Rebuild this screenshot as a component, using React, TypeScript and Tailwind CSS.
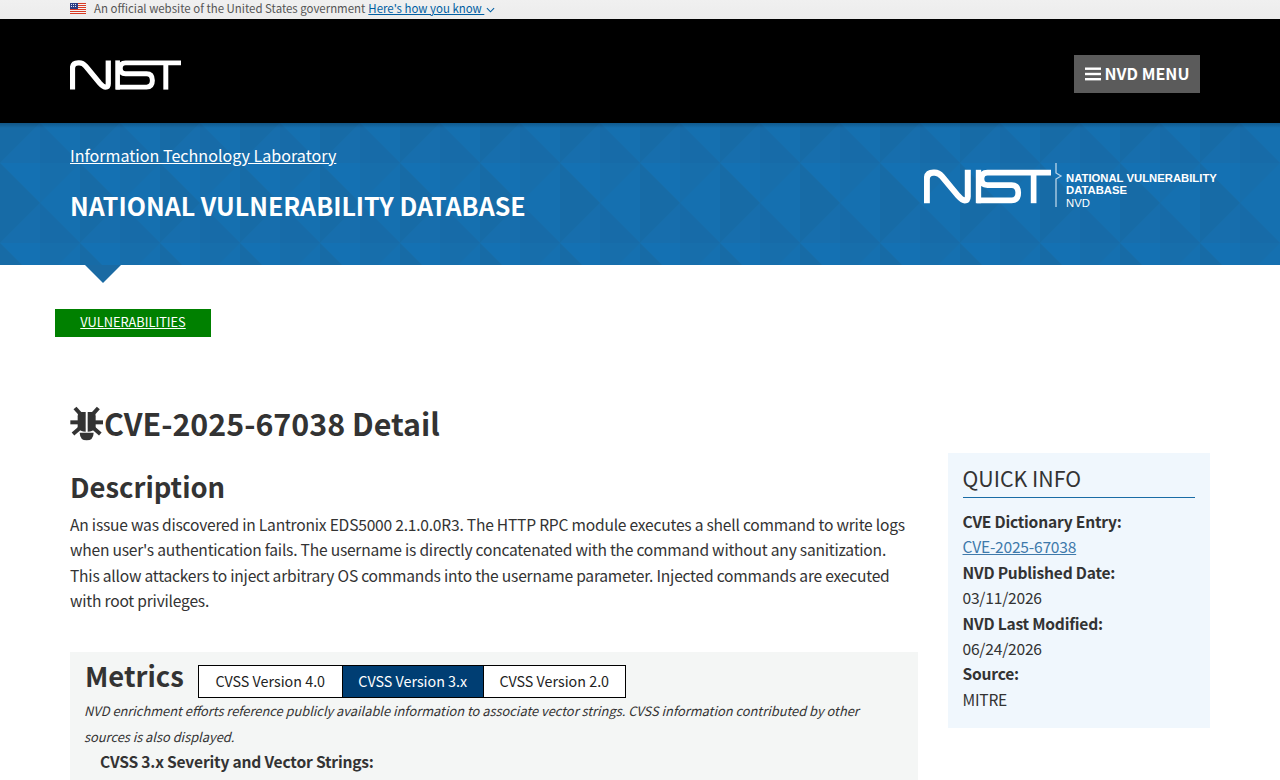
import React from "react";

function NistLogo({ className }: { className?: string }) {
  return (
    <svg viewBox="0 0 380 100" className={className} fill="none" stroke="currentColor" strokeWidth="17">
      <path d="M8.5 100V28Q8.5 8.5 28 8.5H32Q44 8.5 54 20L102 78Q114 91.5 122 91.5Q131 91.5 131 80V0" strokeWidth="18" />
      <path d="M163 0V100" strokeWidth="16" />
      <path d="M380 8.5H190Q172 8.5 172 27Q172 46 190 46H262Q282 46 282 69Q282 91.5 262 91.5H158" />
      <path d="M328 8V100" />
    </svg>
  );
}

function Flag() {
  return (
    <svg viewBox="0 0 16 11" className="w-4 h-[11px] shrink-0">
      <rect width="16" height="11" fill="#f4f4f4" />
      {[0, 2, 4, 6, 8, 10].map((y) => (
        <rect key={y} y={y} width="16" height="1" fill="#d83a24" />
      ))}
      <rect width="8" height="6" fill="#2b3d85" />
      {[1, 3, 5].map((x) =>
        [1, 3].map((y) => <rect key={`${x}${y}`} x={x} y={y} width="1" height="1" fill="#dfe3f2" />)
      )}
    </svg>
  );
}

function Bug() {
  return (
    <svg viewBox="0 0 135 126" className="w-[45px] h-[42px] -ml-[5px] -mr-[6px] shrink-0" fill="#333">
      <path d="M38 40Q38 28 50 27H62V86Q46 86 38 74Z" />
      <path d="M92 40Q92 28 80 27H68V86Q84 86 92 74Z" />
      <path d="M44 89H86Q85 112 65 112Q45 112 44 89Z" />
      <g stroke="#333" strokeWidth="12">
        <path d="M30 15L50 37" />
        <path d="M100 15L80 37" />
        <path d="M16 58H42" />
        <path d="M114 58H88" />
        <path d="M24 93L44 76" />
        <path d="M106 93L86 76" />
      </g>
    </svg>
  );
}

function Pattern() {
  return (
    <svg className="absolute inset-0 w-full h-full" aria-hidden="true">
      <defs>
        <pattern id="tile" x="0" y="40" width="80" height="80" patternUnits="userSpaceOnUse">
          <rect width="80" height="80" fill="#176ea9" />
          <path d="M0 0H40V40Z" fill="#1471b3" />
          <path d="M0 0V40H40Z" fill="#176ba6" />
          <path d="M40 0H80L40 40Z" fill="#176eab" />
          <path d="M80 0V40H40Z" fill="#1570b0" />
          <path d="M0 40H40L0 80Z" fill="#176ba6" />
          <path d="M40 40V80H0Z" fill="#176ead" />
          <path d="M40 40H80V80Z" fill="#1570b0" />
          <path d="M40 40V80H80Z" fill="#176ba8" />
        </pattern>
      </defs>
      <rect width="100%" height="100%" fill="url(#tile)" />
    </svg>
  );
}

export default function App() {
  return (
    <div className="w-[1280px] h-[780px] overflow-hidden bg-white text-[#333] font-['Noto_Sans_CJK_SC','Noto_Sans',sans-serif]">
      <div className="h-[19px] bg-gradient-to-b from-[#f0f0f0] to-[#ececec] px-[70px] flex items-center text-[11.45px] leading-[17px] pb-[2px]">
        <Flag />
        <span className="ml-2 text-[#555]">An official website of the United States government</span>
        <a className="ml-[3px] text-[#005ea2] underline whitespace-pre">Here's how you know </a>
        <svg viewBox="0 0 10 6" className="w-[9px] h-[6px] ml-[2px] mt-[2px]" fill="none" stroke="#005ea2" strokeWidth="1.2">
          <path d="M1 1L5 5L9 1" />
        </svg>
      </div>

      <div className="h-[104px] bg-black px-[70px] pr-[80px] flex items-start justify-between">
        <NistLogo className="w-[111px] h-[30px] mt-[41px] text-white" />
        <button className="mt-9 pb-[1px] h-[38px] w-[126px] bg-[#5b5b5b] text-white font-bold text-[16.1px] flex items-center justify-center gap-1">
          <svg viewBox="0 0 16 14" className="w-4 h-[14px]" fill="white">
            <rect y="0.5" width="16" height="2.4" />
            <rect y="5.8" width="16" height="2.4" />
            <rect y="11" width="16" height="2.4" />
          </svg>
          NVD MENU
        </button>
      </div>

      <div className="relative h-[142px] px-[70px]">
        <Pattern />
        <div className="absolute inset-x-0 top-0 h-[5px] bg-gradient-to-b from-[#00000033] to-transparent" />
        <div className="relative flex justify-between">
          <div>
            <a className="block mt-[18px] text-[16.1px] leading-[28px] text-white underline">Information Technology Laboratory</a>
            <h2 className="mt-[18px] text-[25px] leading-[36px] font-bold text-white">NATIONAL VULNERABILITY DATABASE</h2>
          </div>
          <div className="mt-[40px] -mr-[7px] flex items-start text-white">
            <NistLogo className="w-[127px] h-[35px] mt-[6px]" />
            <svg viewBox="0 0 10 46" className="w-[10px] h-[46px] ml-[3px] -mt-[1px]" fill="none" stroke="#b9d4e8" strokeWidth="1.3">
              <path d="M2 1V11L7 14L2 17V45" />
            </svg>
            <div className="mt-[9px] ml-[2px] font-['Liberation_Sans',sans-serif] text-[11.3px] leading-[12.3px] w-[151px] whitespace-nowrap">
              <div className="font-bold">NATIONAL VULNERABILITY</div>
              <div className="font-bold">DATABASE</div>
              <div>NVD</div>
            </div>
          </div>
        </div>
      </div>

      <div className="px-[85px] h-[18px]">
        <div className="w-9 h-[18px] bg-[#1a6aa3] [clip-path:polygon(0_0,100%_0,50%_100%)]" />
      </div>

      <div className="mt-[26px] ml-[55px] w-[156px] h-[28px] bg-[#008000] text-center text-white text-[12.8px] leading-[26px]">
        <a className="underline">VULNERABILITIES</a>
      </div>

      <div className="mt-[66px] ml-[70px] flex items-center h-[42px]">
        <Bug />
        <h1 className="pb-[2px] text-[30.4px] leading-[40px] font-bold">CVE-2025-67038 Detail</h1>
      </div>

      <div className="mt-[8px] ml-[70px] w-[1140px] grid grid-cols-[848px_262px] gap-x-[30px]">
        <div>
          <h2 className="mt-[13px] text-[27.4px] leading-[40px] font-bold">Description</h2>
          <p className="mt-[6px] text-[15.6px] tracking-[-0.22px] leading-[25.3px]">
            An issue was discovered in Lantronix EDS5000 2.1.0.0R3. The HTTP RPC module executes a shell command to write logs when user's authentication fails. The username is directly concatenated with the command without any sanitization. This allow attackers to inject arbitrary OS commands into the username parameter. Injected commands are executed with root privileges.
          </p>
          <div className="mt-[39px] h-[200px] bg-[#f4f6f5] px-[15px]">
            <div className="flex items-start">
              <h3 className="mt-[4px] text-[27.4px] leading-[38px] font-bold">Metrics</h3>
              <div className="ml-[14px] mt-[13px] flex border border-black h-[33px] text-[14.3px] leading-[29px]">
                <span className="w-[143px] text-center bg-white text-[#222]">CVSS Version 4.0</span>
                <span className="w-[142px] text-center bg-[#003e73] text-white border-x border-black">CVSS Version 3.x</span>
                <span className="w-[141px] text-center bg-white text-[#222]">CVSS Version 2.0</span>
              </div>
            </div>
            <p className="text-[12.85px] -ml-[1px] leading-[26px] italic">
              NVD enrichment efforts reference publicly available information to associate vector strings. CVSS information contributed by other sources is also displayed.
            </p>
            <div className="-mt-[1px] ml-[15px] text-[15.6px] tracking-[-0.2px] leading-[24px] font-bold">CVSS 3.x Severity and Vector Strings:</div>
          </div>
        </div>
        <div className="h-[275px] bg-[#f0f7fd] px-[14.5px]">
          <div className="mt-[9px] w-[232px] pb-[3px] border-b border-[#1a6ca5] text-[21.3px] leading-[32px]">QUICK INFO</div>
          <div className="mt-[11px] text-[15.6px] tracking-[-0.22px] leading-[25.4px]">
            <div className="font-bold">CVE Dictionary Entry:</div>
            <a className="block text-[#3f7aab] underline">CVE-2025-67038</a>
            <div className="font-bold">NVD Published Date:</div>
            <div>03/11/2026</div>
            <div className="font-bold">NVD Last Modified:</div>
            <div>06/24/2026</div>
            <div className="font-bold">Source:</div>
            <div>MITRE</div>
          </div>
        </div>
      </div>
    </div>
  );
}
